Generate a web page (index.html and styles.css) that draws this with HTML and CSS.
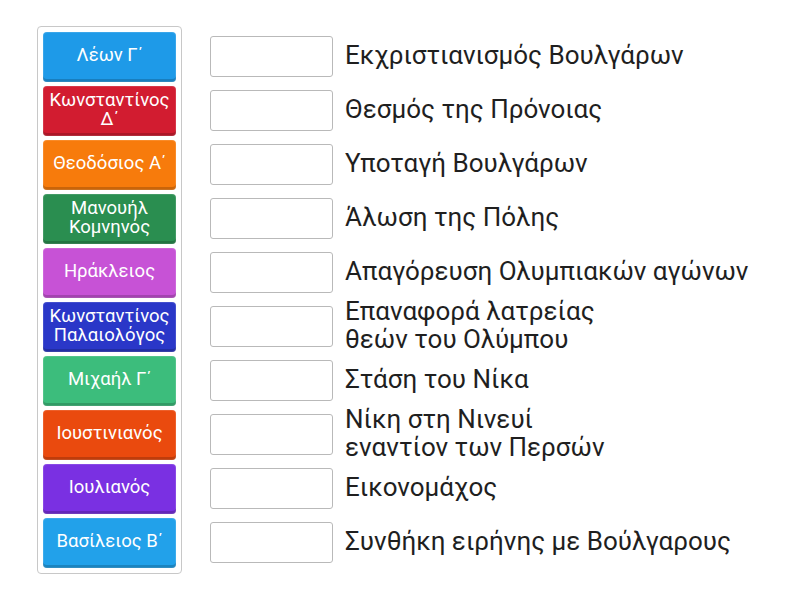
FILE: index.html
```html
<!DOCTYPE html>
<html lang="el">
<head>
  <meta charset="UTF-8">
  <title>Αντιστοίχιση</title>
  <link rel="stylesheet" href="styles.css">
</head>
<body>
  <div class="board">
    <div class="tiles">
      <div class="tile blue">Λέων Γ΄</div>
      <div class="tile red">Κωνσταντίνος Δ΄</div>
      <div class="tile orange">Θεοδόσιος Α΄</div>
      <div class="tile green">Μανουήλ Κομνηνός</div>
      <div class="tile pink">Ηράκλειος</div>
      <div class="tile navy">Κωνσταντίνος Παλαιολόγος</div>
      <div class="tile mint">Μιχαήλ Γ΄</div>
      <div class="tile vermilion">Ιουστινιανός</div>
      <div class="tile purple">Ιουλιανός</div>
      <div class="tile sky">Βασίλειος Β΄</div>
    </div>

    <div class="answers">
      <div class="answer"><div class="slot"></div><div class="label">Εκχριστιανισμός Βουλγάρων</div></div>
      <div class="answer"><div class="slot"></div><div class="label">Θεσμός της Πρόνοιας</div></div>
      <div class="answer"><div class="slot"></div><div class="label">Υποταγή Βουλγάρων</div></div>
      <div class="answer"><div class="slot"></div><div class="label">Άλωση της Πόλης</div></div>
      <div class="answer"><div class="slot"></div><div class="label">Απαγόρευση Ολυμπιακών αγώνων</div></div>
      <div class="answer"><div class="slot"></div><div class="label">Επαναφορά λατρείας<br>θεών του Ολύμπου</div></div>
      <div class="answer"><div class="slot"></div><div class="label">Στάση του Νίκα</div></div>
      <div class="answer"><div class="slot"></div><div class="label">Νίκη στη Νινευί<br>εναντίον των Περσών</div></div>
      <div class="answer"><div class="slot"></div><div class="label">Εικονομάχος</div></div>
      <div class="answer"><div class="slot"></div><div class="label">Συνθήκη ειρήνης με Βούλγαρους</div></div>
    </div>
  </div>
</body>
</html>
```

FILE: styles.css
```css
body {
  margin: 0;
  background: #ffffff;
  font-family: Roboto, "Noto Sans", sans-serif;
}

.board {
  display: flex;
  align-items: flex-start;
  padding: 26px 0 0 37px;
}

.tiles {
  display: flex;
  flex-direction: column;
  gap: 4px;
  width: 133px;
  padding: 5px;
  border: 1px solid #c8c8c8;
  border-radius: 4px;
}

.tile {
  height: 50px;
  box-sizing: border-box;
  display: flex;
  align-items: center;
  justify-content: center;
  text-align: center;
  padding: 0 1px 3px;
  border-radius: 4px;
  color: #ffffff;
  font-size: 18.5px;
  line-height: 19px;
  box-shadow: inset 0 -3px 0 rgba(0, 0, 0, 0.18), inset 0 0 0 1px rgba(255, 255, 255, 0.12);
}

.blue { background: #1e9ae8; }
.red { background: #d21c30; }
.orange { background: #f77b0c; }
.green { background: #2a8e50; }
.pink { background: #c752d6; }
.navy { background: #2a37c8; }
.mint { background: #3cbd7c; }
.vermilion { background: #ea4a0e; }
.purple { background: #7a30e2; }
.sky { background: #22a1ea; }

.answers {
  display: flex;
  flex-direction: column;
  gap: 13px;
  margin: 10px 0 0 28px;
}

.answer {
  display: flex;
  align-items: center;
  height: 41px;
}

.slot {
  flex: none;
  width: 121px;
  height: 39px;
  border: 1px solid #b9b9b9;
  border-radius: 3px;
  background: #ffffff;
}

.label {
  margin-left: 12px;
  margin-top: -3px;
  font-size: 26px;
  line-height: 28px;
  color: #1f1f1f;
  white-space: nowrap;
}
```
